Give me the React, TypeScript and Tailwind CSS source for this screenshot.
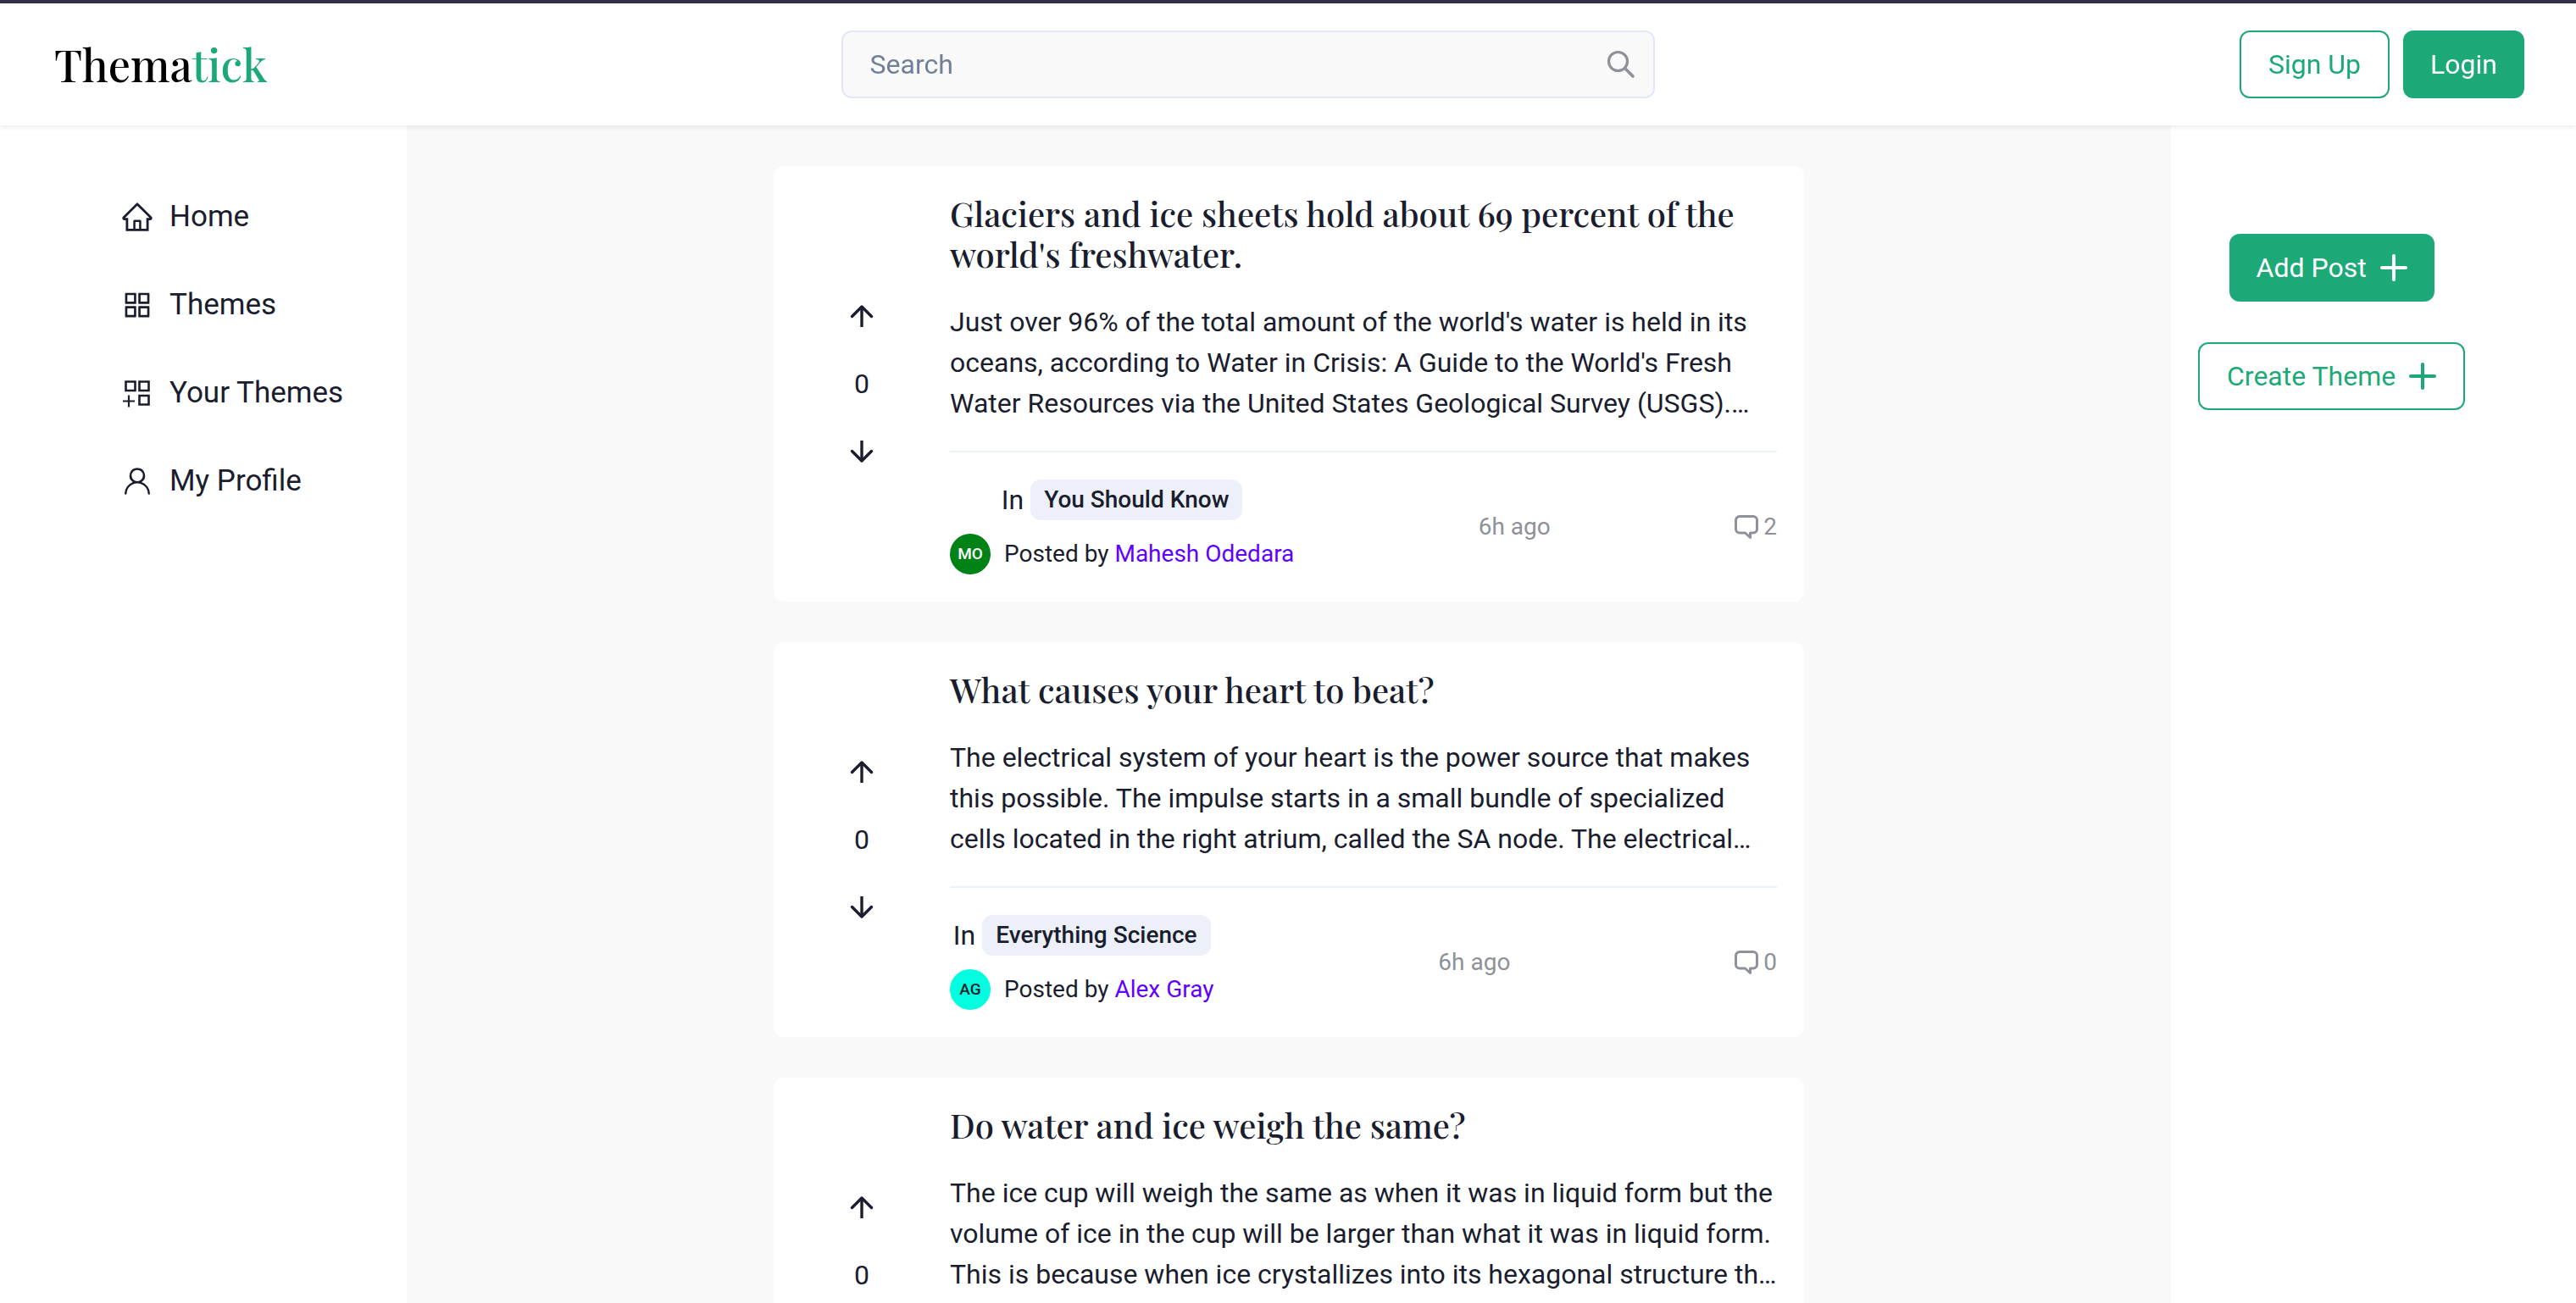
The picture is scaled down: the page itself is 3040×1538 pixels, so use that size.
import type { ReactNode } from 'react';
import { AiOutlineAppstore, AiOutlineHome } from 'react-icons/ai';
import { GoPerson } from 'react-icons/go';

type PostMeta = {
  theme: string;
  author: string;
  initials: string;
  avatarClass: string;
  comments: number;
  age: string;
};

type Post = {
  title: string;
  body: string;
  votes: number;
  meta?: PostMeta;
};

const posts: Post[] = [
  {
    title: 'Glaciers and ice sheets hold about 69 percent of the world\'s freshwater.',
    body: 'Just over 96% of the total amount of the world\'s water is held in its oceans, according to Water in Crisis: A Guide to the World\'s Fresh Water Resources via the United States Geological Survey (USGS).…',
    votes: 0,
    meta: {
      theme: 'You Should Know',
      author: 'Mahesh Odedara',
      initials: 'MO',
      avatarClass: 'bg-[#008217] text-white',
      comments: 2,
      age: '6h ago',
    },
  },
  {
    title: 'What causes your heart to beat?',
    body: 'The electrical system of your heart is the power source that makes this possible. The impulse starts in a small bundle of specialized cells located in the right atrium, called the SA node. The electrical…',
    votes: 0,
    meta: {
      theme: 'Everything Science',
      author: 'Alex Gray',
      initials: 'AG',
      avatarClass: 'bg-[#00ffe1] text-[#1a202c]',
      comments: 0,
      age: '6h ago',
    },
  },
  {
    title: 'Do water and ice weigh the same?',
    body: 'The ice cup will weigh the same as when it was in liquid form but the volume of ice in the cup will be larger than what it was in liquid form. This is because when ice crystallizes into its hexagonal structure th…',
    votes: 0,
  },
];

function ThemesAddIcon() {
  return (
    <svg viewBox="0 0 40 40" className="size-10" fill="none" stroke="currentColor" strokeWidth="2.6" aria-hidden="true">
      <path d="M6.500 6.500h11v10.500h-11zM22.500 6.500h11v10.500h-11zM22.500 23h11v10.500h-11z" />
      <path d="M10 22.500v14M3 29.500h14" strokeWidth="2.200" />
    </svg>
  );
}

function PlusIcon() {
  return (
    <svg viewBox="0 0 32 32" className="size-8" fill="none" stroke="currentColor" strokeWidth="4" strokeLinecap="round" aria-hidden="true">
      <path d="M16 2v28M2 16h28" />
    </svg>
  );
}

function SearchIcon() {
  return (
    <svg viewBox="0 0 36 36" className="size-9" fill="none" stroke="currentColor" strokeLinecap="round" aria-hidden="true">
      <circle cx="14.500" cy="14.500" r="11" strokeWidth="3.200" />
      <path d="M22.800 22.800l9.200 9.200" strokeWidth="3.600" />
    </svg>
  );
}

function ArrowIcon({ down = false }: { down?: boolean }) {
  return (
    <svg viewBox="0 0 28 28" className="size-7" fill="none" stroke="currentColor" strokeWidth="3.400" aria-hidden="true">
      <path d={down ? 'M14 1v23.500' : 'M14 27V3.500'} />
      <path d={down ? 'M2.500 13.500L14 25l11.500-11.500' : 'M2.500 14.500L14 3l11.500 11.500'} strokeLinecap="round" strokeLinejoin="round" />
    </svg>
  );
}

function CommentIcon() {
  return (
    <svg viewBox="0 0 28 28" className="size-7" fill="none" stroke="currentColor" strokeWidth="3" strokeLinejoin="round" aria-hidden="true">
      <path d="M6 1.500h16a4.500 4.500 0 0 1 4.500 4.500v10.500a4.500 4.500 0 0 1-4.500 4.500h-3.500v5.500l-6-5.500H6a4.500 4.500 0 0 1-4.500-4.500V6A4.500 4.500 0 0 1 6 1.500z" />
    </svg>
  );
}

function NavItem({ icon, label }: { icon: ReactNode; label: string }) {
  return (
    <li>
      <a href="#" className="flex h-14 items-center gap-[18px] text-[35px] leading-[56px]">
        {icon}
        {label}
      </a>
    </li>
  );
}

function Button({ solid = false, icon, children }: { solid?: boolean; icon?: ReactNode; children: ReactNode }) {
  return (
    <button
      type="button"
      className={
        'flex h-20 items-center gap-4 rounded-xl px-8 text-[32px] whitespace-nowrap ' +
        (solid ? 'bg-[#1da977] text-white' : 'border-2 border-[#1da977] bg-white text-[#1da977]')
      }
    >
      {children}
      {icon}
    </button>
  );
}

function PostFooter({ meta }: { meta: PostMeta }) {
  return (
    <footer className="flex items-center justify-between text-[28px]">
      <div className="flex flex-col items-center gap-4">
        <div className="flex items-center gap-2">
          <span className="text-[32px] leading-[48px]">In</span>
          <a href="#" className="rounded-xl bg-[#edf0f8] px-4 leading-[48px] font-medium">
            {meta.theme}
          </a>
        </div>
        <div className="flex items-center gap-4">
          <span className={'flex size-12 items-center justify-center rounded-full text-[19px] font-medium ' + meta.avatarClass}>
            {meta.initials}
          </span>
          <span className="leading-[48px]">
            Posted by{' '}
            <a href="#" className="text-[#6200ff]">
              {meta.author}
            </a>
          </span>
        </div>
      </div>
      <time className="text-[#8e9199]">{meta.age}</time>
      <a href="#" aria-label={`${meta.comments} comments`} className="flex items-center gap-1.5 text-[#8e9199]">
        <CommentIcon />
        {meta.comments}
      </a>
    </footer>
  );
}

function PostCard({ post }: { post: Post }) {
  return (
    <article className="flex min-h-[466px] gap-8 rounded-xl bg-white p-8">
      <div className="flex w-36 shrink-0 flex-col items-center justify-center">
        <button type="button" aria-label="Upvote" className="flex size-20 items-center justify-center">
          <ArrowIcon />
        </button>
        <span className="h-20 text-[32px] leading-[80px]">{post.votes}</span>
        <button type="button" aria-label="Downvote" className="flex size-20 items-center justify-center">
          <ArrowIcon down />
        </button>
      </div>
      <div className="min-w-0 flex-1">
        <h2 className="font-['Playfair_Display','Liberation_Serif',serif] text-[40px] leading-[48px] font-medium">{post.title}</h2>
        <p className="mt-8 text-[32px] leading-[48px]">{post.body}</p>
        <hr className="my-8 border-t-2 border-[#edf2f7]" />
        {post.meta && <PostFooter meta={post.meta} />}
      </div>
    </article>
  );
}

export default function App() {
  return (
    <div className="flex h-screen flex-col bg-white font-['Roboto',sans-serif] text-[#1a1d2e]">
      <div className="h-1 shrink-0 bg-[#332f45]" />
      <header className="z-10 flex h-36 shrink-0 items-center justify-between bg-white pr-[61px] pl-16 shadow-[0_2px_6px_rgba(0,0,0,0.08)]">
        <a href="#" className="w-[238px] font-['Playfair_Display','Liberation_Serif',serif] text-[52px] font-medium whitespace-nowrap text-black">
          Thema<span className="text-[#1da977]">tick</span>
        </a>
        <form role="search" className="flex h-20 w-[960px] items-center rounded-xl border-2 border-[#e2e8f5] bg-[#f9f9f9] pr-5 pl-8">
          <input
            type="search"
            aria-label="Search"
            placeholder="Search"
            className="min-w-0 flex-1 bg-transparent text-[32px] outline-none placeholder:text-[#718096]"
          />
          <button type="submit" aria-label="Submit search" className="text-[#8e9199]">
            <SearchIcon />
          </button>
        </form>
        <div className="flex gap-4">
          <Button>Sign Up</Button>
          <Button solid>Login</Button>
        </div>
      </header>
      <div className="flex min-h-0 flex-1">
        <nav aria-label="Main" className="w-[480px] shrink-0 pt-20 pl-[142px]">
          <ul className="flex flex-col gap-12">
            <NavItem icon={<AiOutlineHome className="size-10" />} label="Home" />
            <NavItem icon={<AiOutlineAppstore className="size-10" />} label="Themes" />
            <NavItem icon={<ThemesAddIcon />} label="Your Themes" />
            <NavItem icon={<GoPerson className="size-10" />} label="My Profile" />
          </ul>
        </nav>
        <main className="flex-1 overflow-y-auto bg-[#f9f9f9] py-12 [scrollbar-width:none]">
          <div className="mx-auto flex max-w-[1216px] flex-col gap-12">
            {posts.map((post) => (
              <PostCard key={post.title} post={post} />
            ))}
          </div>
        </main>
        <aside className="w-[478px] shrink-0 pt-32 pl-8">
          <div className="flex w-fit flex-col items-center gap-12">
            <Button solid icon={<PlusIcon />}>
              Add Post
            </Button>
            <Button icon={<PlusIcon />}>Create Theme</Button>
          </div>
        </aside>
      </div>
    </div>
  );
}
